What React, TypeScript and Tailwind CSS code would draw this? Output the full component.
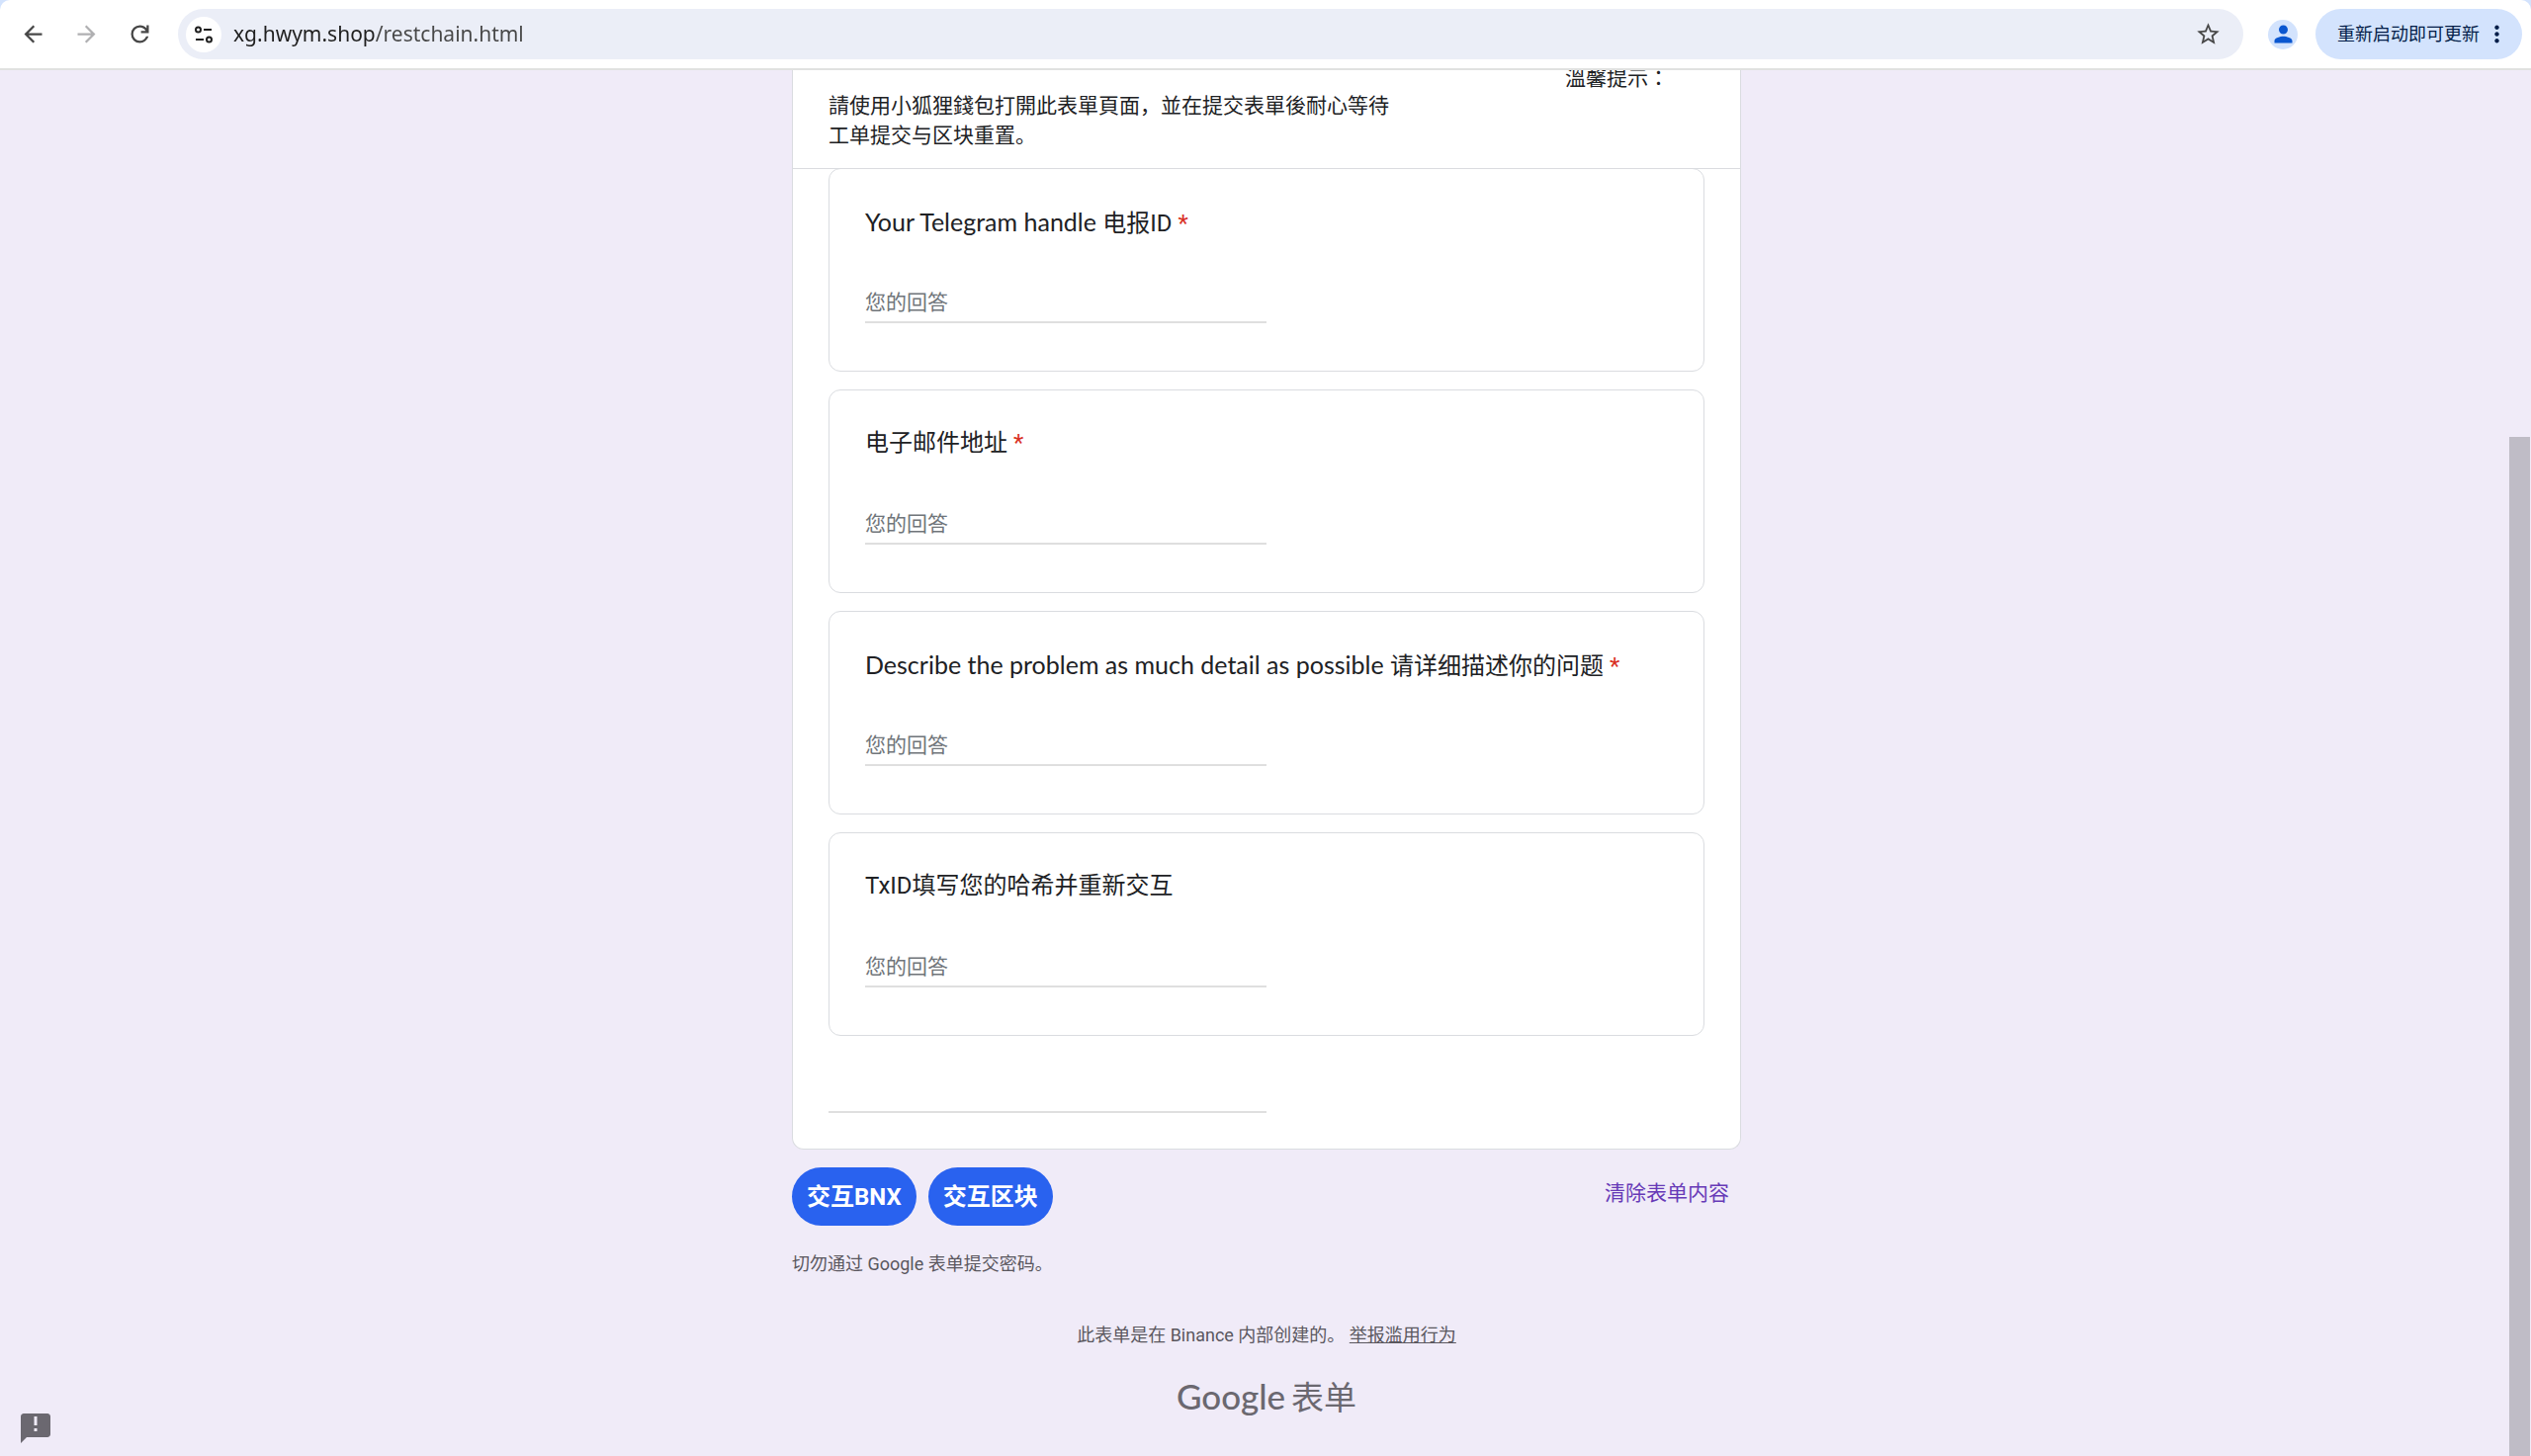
import type { ReactNode } from "react";

type Question = {
  id: string;
  lead?: string;
  title: string;
  required: boolean;
};

const QUESTIONS: Question[] = [
  { id: "telegram", lead: "Your Telegram handle ", title: "电报ID", required: true },
  { id: "email", title: "电子邮件地址", required: true },
  {
    id: "problem",
    lead: "Describe the problem as much detail as possible ",
    title: "请详细描述你的问题",
    required: true,
  },
  { id: "txid", title: "TxID填写您的哈希并重新交互", required: false },
];

function Icon({ d, className }: { d: string; className: string }) {
  return (
    <svg viewBox="0 0 24 24" fill="currentColor" className={className} aria-hidden="true">
      <path d={d} />
    </svg>
  );
}

function NavButton({
  label,
  disabled,
  d,
}: {
  label: string;
  disabled?: boolean;
  d: string;
}) {
  return (
    <button
      type="button"
      aria-label={label}
      disabled={disabled}
      className="flex h-full w-[54px] items-center justify-center text-[#474747] disabled:text-[#b0b0b2]"
    >
      <Icon d={d} className="size-[27px]" />
    </button>
  );
}

function BrowserBar() {
  return (
    <header className="bg-[#d3e3fd]">
      <div className="flex h-[71px] items-center rounded-t-[10px] border-b-2 border-[#e0e1e0] bg-white pr-[9px] pl-1.5">
        <NavButton
          label="后退"
          d="M20 11H7.83l5.59-5.59L12 4l-8 8 8 8 1.41-1.41L7.83 13H20v-2z"
        />
        <NavButton
          label="前进"
          disabled
          d="M12 4l-1.41 1.41L16.17 11H4v2h12.17l-5.58 5.59L12 20l8-8z"
        />
        <NavButton
          label="重新加载"
          d="M12 20q-3.35 0-5.675-2.325T4 12t2.325-5.675T12 4q1.725 0 3.3.713T18 6.75V4h2v7h-7V9h4.2q-.8-1.4-2.187-2.2T12 6Q9.5 6 7.75 7.75T6 12t1.75 4.25T12 18q1.925 0 3.475-1.1T17.65 14h2.1q-.7 2.65-2.85 4.325T12 20"
        />

        <div className="ml-3 flex h-[51px] flex-1 items-center rounded-full bg-[#ebeef7] pr-[22px] pl-2">
          <button
            type="button"
            aria-label="查看网站信息"
            className="flex size-9 items-center justify-center rounded-full bg-white text-[#1f1f1f]"
          >
            <svg viewBox="0 0 20 20" className="size-5" fill="none" stroke="currentColor" strokeWidth="2" aria-hidden="true">
              <circle cx="4.5" cy="5" r="2.5" />
              <path d="M10 5h8M2 15h8" />
              <circle cx="15.5" cy="15" r="2.5" />
            </svg>
          </button>
          <input
            type="text"
            aria-label="地址栏"
            defaultValue="xg.hwym.shop/restchain.html"
            className="ml-3 h-9 flex-1 bg-[linear-gradient(to_right,#1f1f1f_144px,#474747_144px)] bg-clip-text pb-0.5 font-['Noto_Sans',sans-serif] text-[21px] text-transparent outline-none"
          />
          <button type="button" aria-label="收藏" className="text-[#474747]">
            <Icon
              className="size-[27px]"
              d="M22 9.24l-7.19-.62L12 2 9.19 8.63 2 9.24l5.46 4.73L5.82 21 12 17.27 18.18 21l-1.63-7.03L22 9.24zM12 15.4l-3.76 2.27 1-4.28-3.32-2.88 4.38-.38L12 6.1l1.71 4.04 4.38.38-3.32 2.88 1 4.28L12 15.4z"
            />
          </button>
        </div>

        <button
          type="button"
          aria-label="个人资料"
          className="ml-[25px] flex size-[30px] items-center justify-center rounded-full bg-[#d3e3fd] text-[#0b57d0]"
        >
          <Icon
            className="size-[27px]"
            d="M12 12c2.21 0 4-1.79 4-4s-1.79-4-4-4-4 1.79-4 4 1.79 4 4 4zm0 2c-2.67 0-8 1.34-8 4v2h16v-2c0-2.66-5.33-4-8-4z"
          />
        </button>
        <button
          type="button"
          className="ml-[18px] flex h-[51px] items-center gap-1 rounded-full bg-[#d3e3fd] pr-3 pl-[22px] text-lg text-[#041e49]"
        >
          重新启动即可更新
          <Icon
            className="size-[27px]"
            d="M12 8c1.1 0 2-.9 2-2s-.9-2-2-2-2 .9-2 2 .9 2 2 2zm0 2c-1.1 0-2 .9-2 2s.9 2 2 2 2-.9 2-2-.9-2-2-2zm0 6c-1.1 0-2 .9-2 2s.9 2 2 2 2-.9 2-2-.9-2-2-2z"
          />
        </button>
      </div>
    </header>
  );
}

function QuestionCard({ question }: { question: Question }) {
  return (
    <div className="rounded-xl border border-[#dadce0] px-9 pt-[35px] pb-12">
      <label
        htmlFor={question.id}
        className="block h-9 text-2xl leading-9 whitespace-nowrap text-[#202124]"
      >
        {question.lead && (
          <span className="font-[Lato,sans-serif] text-[25px]">{question.lead}</span>
        )}
        {question.title}
        {question.required && <span className="text-[#d93025]"> *</span>}
      </label>
      <input
        id={question.id}
        type="text"
        placeholder="您的回答"
        className="mt-[46px] block h-[39px] w-1/2 border-b-2 border-[#dfdfdf] pb-0.5 text-[21px] outline-none placeholder:text-[#70757a]"
      />
    </div>
  );
}

function ActionButton({ children }: { children: ReactNode }) {
  return (
    <button
      type="button"
      className="h-[59px] rounded-full bg-[#2962ef] px-[15px] text-2xl font-bold text-white"
    >
      {children}
    </button>
  );
}

export default function App() {
  return (
    <div className="relative flex min-h-screen flex-col bg-[#f0ebf8] font-[Roboto,'Noto_Sans_CJK_SC',sans-serif]">
      <BrowserBar />

      <main className="flex-1 overflow-hidden pl-0.5">
        <form className="mx-auto max-w-[960px]">
          <div className="rounded-b-xl border border-t-0 border-[#dadce0] bg-white pb-9">
            <div className="-mt-[9px] border-b border-[#dadce0] px-9 pb-[18px] text-[21px] leading-[30px] text-[#202124]">
              <p className="pr-9 text-right font-['Noto_Sans_CJK_TC',sans-serif]">溫馨提示：</p>
              <p>
                請使用小狐狸錢包打開此表單頁面，並在提交表單後耐心等待
                <br />
                工单提交与区块重置。
              </p>
            </div>

            <div className="-mt-px flex flex-col gap-[18px] px-9">
              {QUESTIONS.map((question) => (
                <QuestionCard key={question.id} question={question} />
              ))}
            </div>

            <div className="px-9 pt-[39px]">
              <input
                type="text"
                aria-label="其他"
                className="block h-[39px] w-1/2 border-b-2 border-[#dfdfdf] text-[21px] outline-none"
              />
            </div>
          </div>

          <div className="mt-[18px] flex items-center justify-between pr-3">
            <div className="flex gap-3">
              <ActionButton>交互BNX</ActionButton>
              <ActionButton>交互区块</ActionButton>
            </div>
            <button type="reset" className="pb-1.5 text-[21px] text-[#673ab7]">
              清除表单内容
            </button>
          </div>
        </form>

        <footer className="mx-auto max-w-[960px] text-lg leading-6 text-[#5a575e]">
          <p className="mt-[27px]">切勿通过 Google 表单提交密码。</p>
          <p className="mt-12 text-center">
            此表单是在 Binance 内部创建的。{" "}
            <a href="#report" className="underline">
              举报滥用行为
            </a>
          </p>
          <p className="mt-[22px] text-center leading-[54px] text-[#6b6870]">
            <a href="#forms" className="inline-flex items-baseline gap-1.5">
              <span className="font-[Lato,sans-serif] text-[35px] font-medium">Google</span>
              <span className="text-[33px]">表单</span>
            </a>
          </p>
        </footer>
      </main>

      <button
        type="button"
        aria-label="报告问题"
        className="absolute bottom-2.5 left-[18px] text-[#6b6870]"
      >
        <Icon
          className="size-9"
          d="M20 2H4c-1.1 0-2 .9-2 2v18l4-4h14c1.100 0 2-.9 2-2V4c0-1.100-.9-2-2-2zm-7 12h-2v-2h2v2zm0-4h-2V4h2v6z"
        />
      </button>
      <div className="absolute right-px bottom-0 top-[442px] w-[21px] bg-[#bfbcc6]" />
    </div>
  );
}
